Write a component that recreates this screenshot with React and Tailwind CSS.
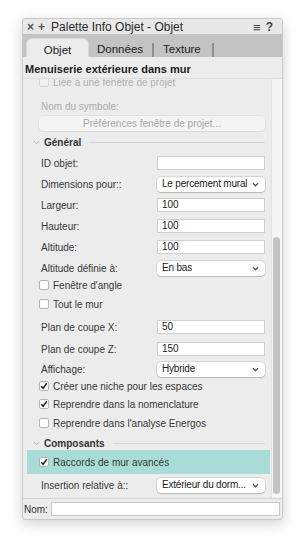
import React from "react";

const font = { fontFamily: '"Liberation Sans", Arial, sans-serif' };

function Chevron() {
  return (
    <svg width="7" height="5" viewBox="0 0 7 5" className="shrink-0">
      <path d="M1 1.2 L3.5 3.8 L6 1.2" fill="none" stroke="#555" strokeWidth="1.3" />
    </svg>
  );
}

function Check({ checked, disabled }) {
  return (
    <div
      className={`w-[10px] h-[10px] rounded-[2px] border flex items-center justify-center shrink-0 ${
        disabled ? "border-[#d6d6d6] bg-[#f2f2f2]" : "border-[#b4b4b4] bg-white"
      }`}
    >
      {checked && (
        <svg width="8" height="8" viewBox="0 0 8 8">
          <path d="M1.3 4.2 L3.1 6.2 L6.8 1.2" fill="none" stroke="#222" strokeWidth="1.5" />
        </svg>
      )}
    </div>
  );
}

function Field({ label, value, mt = "mt-[7px]" }) {
  return (
    <div className={`${mt} h-[14px] flex items-center`}>
      <div className="pl-[18px] w-[134px] text-[10px] text-[#383838]">{label}</div>
      <div className="w-[108px] h-[14px] bg-white border border-[#cfcfcf] text-[10px] text-[#222] pl-[4px] flex items-center leading-none">
        {value}
      </div>
    </div>
  );
}

function Select({ label, value, mt = "mt-[7px]" }) {
  return (
    <div className={`${mt} h-[14px] flex items-center`}>
      <div className="pl-[18px] w-[134px] text-[10px] text-[#383838]">{label}</div>
      <div className="w-[108px] h-[15px] bg-white rounded-[4px] shadow-[0_0_0_0.5px_rgba(0,0,0,0.18),0_1px_1px_rgba(0,0,0,0.15)] text-[10px] tracking-[-0.2px] text-[#222] pl-[5px] pr-[6px] flex items-center justify-between leading-none">
        <span className="truncate">{value}</span>
        <Chevron />
      </div>
    </div>
  );
}

function CheckRow({ label, checked, mt, disabled }) {
  return (
    <div className={`${mt} h-[14px] flex items-center pl-[16px]`}>
      <Check checked={checked} disabled={disabled} />
      <span className={`ml-[4px] text-[10px] ${disabled ? "text-[#b0b0b0]" : "text-[#383838]"}`}>{label}</span>
    </div>
  );
}

function Section({ label, mt, h = "h-[14px]" }) {
  return (
    <div className={`${mt} ${h} flex items-center pl-[10px] pr-[6px]`}>
      <svg width="7" height="5" viewBox="0 0 7 5" className="shrink-0">
        <path d="M0.8 1 L3.5 3.8 L6.2 1" fill="none" stroke="#b8b8b8" strokeWidth="1" />
      </svg>
      <span className="ml-[4px] text-[10px] font-bold text-[#333]">{label}</span>
      <div className="flex-1 ml-[8px] h-px bg-[#d4d4d4]" />
    </div>
  );
}

export default function App() {
  return (
    <div className="w-[305px] h-[547px] bg-white overflow-hidden" style={font}>
      <div className="ml-[22px] mt-[18px] w-[261px] h-[502px] flex flex-col border border-[#c9c9c9] rounded-[3px] shadow-[0_4px_14px_rgba(0,0,0,0.18)] overflow-hidden bg-[#ececec]">
        {/* title bar */}
        <div className="h-[15px] pt-[1px] bg-[#e8e8e8] flex items-center text-[12px] text-[#2a2a2a] leading-none">
          <span className="ml-[4px] text-[12px] font-bold text-[#555]">×</span>
          <span className="ml-[4px] text-[12px] font-bold text-[#555]">+</span>
          <span className="ml-[6px]">Palette Info Objet - Objet</span>
          <span className="ml-auto text-[13px] text-[#444]">≡</span>
          <span className="ml-[5px] mr-[9px] font-bold text-[#444]">?</span>
        </div>
        {/* tabs */}
        <div className="h-[23px] bg-[#c3c3c3] flex items-end text-[11.5px] text-[#222]">
          <div className="ml-[3px] w-[63px] h-[19px] pt-[5px] bg-[#ececec] rounded-t-[6px] flex items-center justify-center border-t border-l border-r border-[#d6d6d6]">
            Objet
          </div>
          <div className="h-[19px] pt-[4px] flex items-center">
            <span className="ml-[8px]">Données</span>
            <span className="ml-[9px] w-[2px] h-[14px] bg-[#8f8f8f]" />
            <span className="ml-[9px]">Texture</span>
            <span className="ml-[11px] w-[2px] h-[14px] bg-[#8f8f8f]" />
          </div>
        </div>
        {/* header */}
        <div className="h-[22px] pt-[4px] flex items-center pl-[2px] text-[11px] font-bold text-[#222] border-b border-[#dcdcdc]">
          Menuiserie extérieure dans mur
        </div>
        {/* scroll area */}
        <div className="h-[419px] flex overflow-hidden">
          <div className="flex-1 overflow-hidden">
            <div className="-mt-[4px]">
              <CheckRow label="Liée à une fenêtre de projet" disabled mt="mt-0" />
              <div className="mt-[10px] h-[14px] flex items-center pl-[18px] text-[10px] text-[#ababab]">
                Nom du symbole:
              </div>
              <div className="mt-[3px] ml-[16px] w-[226px] h-[15px] rounded-[4px] bg-[#f4f4f4] shadow-[0_0_0_0.5px_rgba(0,0,0,0.08),0_1px_1px_rgba(0,0,0,0.06)] flex items-center justify-center text-[10px] text-[#a6a6a6]">
                Préférences fenêtre de projet...
              </div>
              <Section label="Général" mt="mt-[4px]" />
              <Field label="ID objet:" value="" />
              <Select label="Dimensions pour::" value="Le percement mural" />
              <Field label="Largeur:" value="100" />
              <Field label="Hauteur:" value="100" />
              <Field label="Altitude:" value="100" />
              <Select label="Altitude définie à:" value="En bas" />
              <CheckRow label="Fenêtre d'angle" mt="mt-[3px]" />
              <CheckRow label="Tout le mur" mt="mt-[5px]" />
              <Field label="Plan de coupe X:" value="50" mt="mt-[9px]" />
              <Field label="Plan de coupe Z:" value="150" mt="mt-[8px]" />
              <Select label="Affichage:" value="Hybride" mt="mt-[6px]" />
              <CheckRow label="Créer une niche pour les espaces" checked mt="mt-[3px]" />
              <CheckRow label="Reprendre dans la nomenclature" checked mt="mt-[4px]" />
              <CheckRow label="Reprendre dans l'analyse Energos" mt="mt-[5px]" />
              <Section label="Composants" mt="mt-[7px]" h="h-[13px]" />
              <div className="ml-[4px] mr-[1px] h-[24px] bg-[#a9dcd7] flex items-center pl-[12px]">
                <Check checked />
                <span className="ml-[4px] text-[10px] text-[#383838]">Raccords de mur avancés</span>
              </div>
              <Select label="Insertion relative à::" value="Extérieur du dorm..." mt="mt-[4px]" />
            </div>
          </div>
          <div className="w-[11px] bg-[#f5f5f5] border-l border-[#e2e2e2]">
            <div className="mt-[158px] ml-[1px] w-[7px] h-[257px] rounded-full bg-[#c4c4c4]" />
          </div>
        </div>
        {/* Nom row */}
        <div className="flex-1 flex items-center border-t border-[#d4d4d4] pl-[1px] pr-[2px]">
          <span className="text-[10px] text-[#333]">Nom:</span>
          <div className="ml-[3px] flex-1 h-[14px] bg-white border border-[#c8c8c8]" />
        </div>
      </div>
    </div>
  );
}
